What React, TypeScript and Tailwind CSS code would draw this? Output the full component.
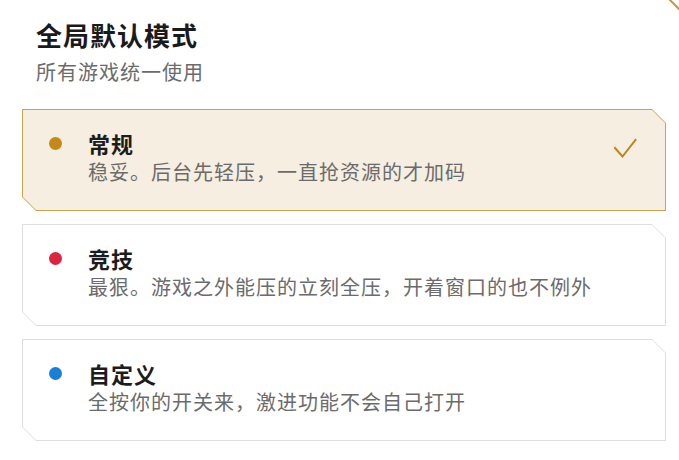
import React from "react";

type Mode = {
  name: string;
  desc: string;
  dot: string;
  active?: boolean;
};

const modes: Mode[] = [
  { name: "常规", desc: "稳妥。后台先轻压，一直抢资源的才加码", dot: "bg-[#c4891a]", active: true },
  { name: "竞技", desc: "最狠。游戏之外能压的立刻全压，开着窗口的也不例外", dot: "bg-[#dc2440]" },
  { name: "自定义", desc: "全按你的开关来，激进功能不会自己打开", dot: "bg-[#1a7fd6]" },
];

function Card({ m }: { m: Mode }) {
  return (
    <div
      className={
        "p-px [clip-path:polygon(0_0,calc(100%-14px)_0,100%_14px,100%_100%,14px_100%,0_calc(100%-14px))] " +
        (m.active ? "bg-[#c9a24c]" : "bg-[#dedede]")
      }
    >
      <div
        className={
          "flex items-start h-[100px] pl-[26px] pr-[28px] pt-[19px] [clip-path:polygon(0_0,calc(100%-13px)_0,100%_13px,100%_100%,13px_100%,0_calc(100%-13px))] " +
          (m.active ? "bg-[#f6eee0]" : "bg-white")
        }
      >
        <div className="h-[28px] flex items-center">
          <div className={"w-[13px] h-[13px] rounded-full " + m.dot} />
        </div>
        <div className="ml-[26px] flex flex-col">
          <div className="text-[22px] leading-[28px] font-bold tracking-[1px] text-[#1c1c1c]">{m.name}</div>
          <div className="text-[20px] leading-[30px] tracking-[1px] text-[#6b6b6b]">{m.desc}</div>
        </div>
        {m.active && (
          <svg className="ml-auto mt-[9px]" width="23" height="22" viewBox="0 0 23 22" fill="none">
            <polyline points="1,10 8.5,18.5 21.5,2" stroke="#b8871f" strokeWidth="2" strokeLinecap="square" />
          </svg>
        )}
      </div>
    </div>
  );
}

export default function App() {
  return (
    <div
      className="relative w-[679px] h-[460px] overflow-hidden bg-white"
      style={{ fontFamily: '"Noto Sans CJK SC", "Noto Sans", sans-serif' }}
    >
      <svg className="absolute top-0 right-0" width="12" height="12" viewBox="0 0 12 12">
        <line x1="2" y1="-1" x2="13" y2="10" stroke="#c49a3a" strokeWidth="2" />
      </svg>
      <div className="pl-[36px] pt-[17px]">
        <div className="text-[26px] leading-[36px] font-bold tracking-[1px] text-[#1a1a1a]">全局默认模式</div>
        <div className="mt-[5px] text-[20px] leading-[28px] tracking-[1px] text-[#6b6b6b]">所有游戏统一使用</div>
      </div>
      <div className="mt-[23px] pl-[22px] pr-[13px] flex flex-col gap-[13px]">
        {modes.map((m) => (
          <Card key={m.name} m={m} />
        ))}
      </div>
    </div>
  );
}
